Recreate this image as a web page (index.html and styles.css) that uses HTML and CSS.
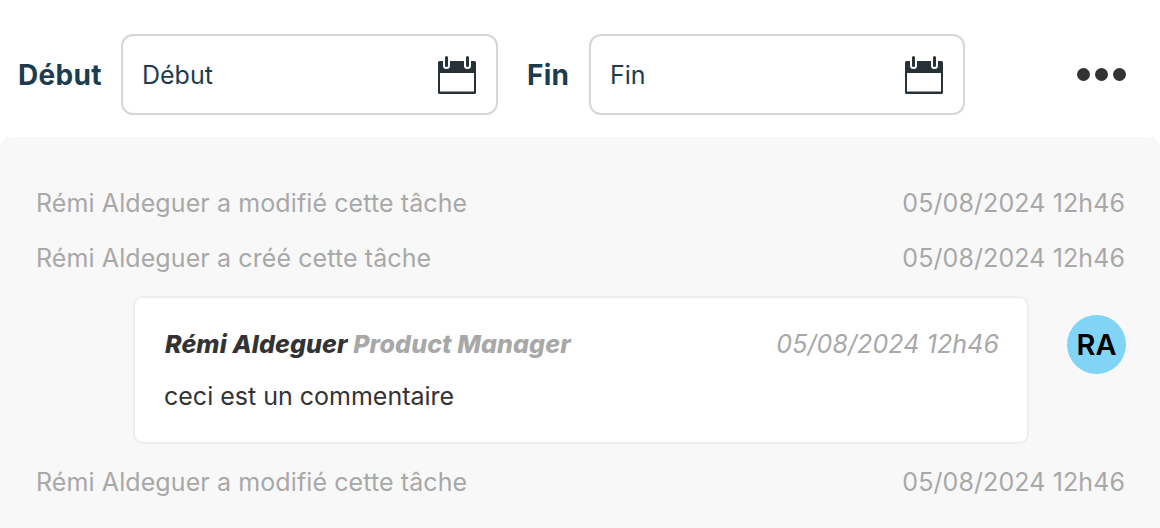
FILE: index.html
```html
<!DOCTYPE html>
<html lang="fr">

<head>
  <meta charset="UTF-8" />
  <title>Tâche</title>
  <link rel="stylesheet" href="styles.css">
</head>

<body>
  <!-- Dates -->
  <div class="dates">
    <label class="date-label">Début</label>
    <div class="date-input">
      <span>Début</span>
      <svg class="cal" viewBox="0 0 40 40" aria-hidden="true">
        <path fill="#263238" fill-rule="evenodd" d="M1 7.5A1.500 1.500 0 0 1 2.500 6H6v4.500a3.500 3.500 0 0 0 7 0V6h14v4.500a3.500 3.500 0 0 0 7 0V6h3.500A1.500 1.500 0 0 1 39 7.500v30a1.500 1.500 0 0 1-1.500 1.500h-35A1.500 1.500 0 0 1 1 37.500zM3 18v18.500h34V18z"/>
        <rect fill="#263238" x="8" y="1" width="3" height="11" rx="1.500"/>
        <rect fill="#263238" x="29" y="1" width="3" height="11" rx="1.500"/>
      </svg>
    </div>
    <label class="date-label date-label-end">Fin</label>
    <div class="date-input date-input-end">
      <span>Fin</span>
      <svg class="cal" viewBox="0 0 40 40" aria-hidden="true">
        <path fill="#263238" fill-rule="evenodd" d="M1 7.5A1.500 1.500 0 0 1 2.500 6H6v4.500a3.500 3.500 0 0 0 7 0V6h14v4.500a3.500 3.500 0 0 0 7 0V6h3.500A1.500 1.500 0 0 1 39 7.500v30a1.500 1.500 0 0 1-1.500 1.500h-35A1.500 1.500 0 0 1 1 37.500zM3 18v18.500h34V18z"/>
        <rect fill="#263238" x="8" y="1" width="3" height="11" rx="1.500"/>
        <rect fill="#263238" x="29" y="1" width="3" height="11" rx="1.500"/>
      </svg>
    </div>
    <div class="more"><i></i><i></i><i></i></div>
  </div>

  <!-- Activity -->
  <div class="activity">
    <div class="log">
      <span>Rémi Aldeguer a modifié cette tâche</span>
      <span>05/08/2024 12h46</span>
    </div>
    <div class="log">
      <span>Rémi Aldeguer a créé cette tâche</span>
      <span>05/08/2024 12h46</span>
    </div>

    <div class="comment-row">
      <div class="comment">
        <div class="comment-head">
          <span class="author">Rémi Aldeguer <em>Product Manager</em></span>
          <span class="comment-date">05/08/2024 12h46</span>
        </div>
        <p>ceci est un commentaire</p>
      </div>
      <div class="avatar">RA</div>
    </div>

    <div class="log">
      <span>Rémi Aldeguer a modifié cette tâche</span>
      <span>05/08/2024 12h46</span>
    </div>
  </div>
</body>

</html>
```

FILE: styles.css
```css
body {
  margin: 0;
  background: #fff;
  font-family: 'Inter', sans-serif;
  color: #263238;
}

.dates {
  display: flex;
  align-items: center;
  height: 137px;
  padding: 12px 34px 0 18px;
  box-sizing: border-box;
}

.date-label {
  width: 84px;
  font-size: 28px;
  font-weight: 700;
  letter-spacing: 0.3px;
  white-space: nowrap;
  color: #1d3c50;
  margin-right: 19px;
}

.date-label-end {
  width: 42px;
  margin-right: 20px;
}

.date-input {
  width: 377px;
  height: 81px;
  box-sizing: border-box;
  border: 2px solid #d6d6d6;
  border-radius: 12px;
  display: flex;
  align-items: center;
  justify-content: space-between;
  padding: 0 19px;
  font-size: 25px;
  color: #1d3c50;
  margin-right: 29px;
}

.date-input-end {
  width: 376px;
}

.cal {
  width: 40px;
  height: 40px;
}

.more {
  margin-left: auto;
  display: flex;
  gap: 5px;
}

.more i {
  width: 13px;
  height: 13px;
  border-radius: 50%;
  background: #333;
}

.activity {
  background: #f8f8f8;
  border-radius: 10px 10px 0 0;
  height: 391px;
  padding: 38px 35px 0 36px;
  box-sizing: border-box;
  color: #a8a8a8;
  font-size: 25px;
  letter-spacing: 0.1px;
}

.log {
  display: flex;
  justify-content: space-between;
  height: 55px;
  line-height: 57px;
}

.comment-row {
  display: flex;
  justify-content: space-between;
  align-items: flex-start;
  margin: 11px -1px 10px 97px;
}

.comment {
  width: 896px;
  height: 148px;
  box-sizing: border-box;
  background: #fff;
  border: 2px solid #eee;
  border-radius: 10px;
  padding: 29px 28px 0 30px;
}

.comment-head {
  display: flex;
  justify-content: space-between;
  font-style: italic;
  line-height: 34px;
}

.author {
  font-weight: 800;
  color: #333;
}

.author em {
  color: #a8a8a8;
}

.comment p {
  margin: 18px 0 0 -1px;
  color: #333;
  line-height: 34px;
  letter-spacing: 0;
}

.avatar {
  width: 59px;
  height: 59px;
  margin-top: 19px;
  border-radius: 50%;
  background: #81d4f5;
  color: #000;
  font-weight: 600;
  font-size: 29px;
  letter-spacing: 0;
  display: flex;
  align-items: center;
  justify-content: center;
}
```
